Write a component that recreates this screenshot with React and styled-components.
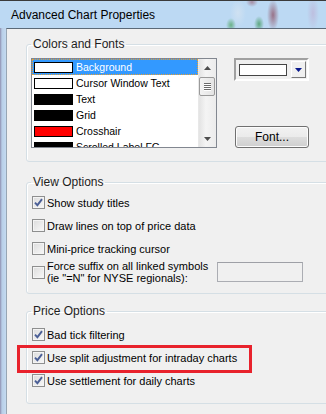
import React from 'react';
import styled, { createGlobalStyle } from 'styled-components';

const GlobalStyle = createGlobalStyle`
  html, body {
    margin: 0;
    padding: 0;
    background: #f0f0f0;
  }
  body {
    font-family: "Liberation Sans", Arial, sans-serif;
    color: #000;
  }
`;

const Window = styled.div`
  width: 326px;
  height: 414px;
  overflow: hidden;
  display: flex;
  flex-direction: column;
  background: linear-gradient(90deg, #8f8fb0 0, #b8cfe8 2px, #c4daf0 6px);
`;

const TitleBar = styled.div`
  height: 28px;
  flex: none;
  box-sizing: border-box;
  border-top: 1px solid #3a3a3a;
  padding: 6px 0 0 11px;
  font-size: 12px;
  line-height: 16px;
  color: #000;
  background:
    radial-gradient(ellipse 5px 7px at 231px 24px, rgba(70, 160, 90, 0.7), transparent),
    radial-gradient(ellipse 5px 8px at 259px 23px, rgba(60, 150, 90, 0.75), transparent),
    radial-gradient(ellipse 6px 16px at 273px 14px, rgba(140, 80, 100, 0.75), transparent),
    radial-gradient(ellipse 6px 5px at 252px 1px, rgba(150, 90, 110, 0.6), transparent),
    radial-gradient(ellipse 6px 18px at 313px 12px, rgba(190, 180, 215, 0.7), transparent),
    radial-gradient(ellipse 8px 14px at 238px 12px, rgba(220, 230, 240, 0.6), transparent),
    #bcd9f3;
`;

const Body = styled.div`
  flex: 1;
  display: flex;
  padding-left: 6px;
`;

const Client = styled.div`
  width: 360px;
  flex: none;
  box-sizing: border-box;
  background: #f0f0f0;
  border-top: 1px solid #5b6a78;
  border-left: 1px solid #97a6b4;
  padding: 8px 0 0 19px;
`;

const Group = styled.fieldset`
  position: relative;
  margin: ${(p) => p.$top || 0}px 0 0 0;
  padding: ${(p) => p.$pad};
  width: 330px;
  box-sizing: border-box;
  min-width: 0;
  border: 1px solid #d5dfe5;
  border-radius: 3px;
  box-shadow: inset 1px 1px 0 #fff;
`;

const Legend = styled.legend`
  padding: 0 2px;
  font-size: 12px;
  line-height: 14px;
  color: #1e1e1e;
`;

const ColorsRow = styled.div`
  display: flex;
  gap: 17px;
`;

const ListBox = styled.div`
  width: 186px;
  height: 90px;
  box-sizing: border-box;
  border: 1px solid #828790;
  background: #fff;
  display: flex;
  overflow: hidden;
`;

const Items = styled.div`
  flex: 1;
  overflow: hidden;
`;

const Item = styled.div`
  height: 16px;
  box-sizing: border-box;
  display: flex;
  align-items: center;
  gap: 3px;
  padding-left: 2px;
  font-size: 10.5px;
  white-space: nowrap;
  color: ${(p) => (p.$selected ? '#fff' : '#000')};
  background: ${(p) => (p.$selected ? '#3399ff' : 'transparent')};
  outline: ${(p) => (p.$selected ? '1px dotted #e8a030' : 'none')};
  outline-offset: -1px;
`;

const Swatch = styled.span`
  width: 39px;
  height: 11px;
  flex: none;
  box-sizing: border-box;
  border: 1px solid #000;
  background: ${(p) => p.$color};
`;

const ScrollBar = styled.div`
  width: 17px;
  flex: none;
  display: flex;
  flex-direction: column;
  background: linear-gradient(90deg, #e3e3e3, #f4f4f4 40%, #ececec);
  border-left: 1px solid #e8e8e8;
`;

const Arrow = styled.div`
  height: 17px;
  flex: none;
  display: flex;
  align-items: center;
  justify-content: center;
`;

const Track = styled.div`
  flex: 1;
`;

const Thumb = styled.div`
  margin: 1px 1px 0 0;
  height: 19px;
  box-sizing: border-box;
  border: 1px solid #9a9a9a;
  border-radius: 2px;
  background: linear-gradient(90deg, #f3f3f3, #e4e4e4);
  display: flex;
  flex-direction: column;
  justify-content: center;
  align-items: center;
  gap: 1px;
`;

const Grip = styled.span`
  width: 7px;
  height: 1px;
  background: #6a6a6a;
  box-shadow: 0 1px 0 #fff;
`;

const Side = styled.div`
  width: 75px;
  display: flex;
  flex-direction: column;
  justify-content: space-between;
`;

const Combo = styled.div`
  height: 23px;
  box-sizing: border-box;
  border: 2px solid;
  border-color: #a0a0a0 #fff #fff #a0a0a0;
  background: #f0f0f0;
  display: flex;
  align-items: center;
  padding: 0 1px 0 3px;
  gap: 4px;
`;

const ComboValue = styled.span`
  width: 48px;
  height: 12px;
  box-sizing: border-box;
  border: 1px solid #454545;
  background: #fff;
`;

const ComboButton = styled.span`
  width: 15px;
  height: 17px;
  box-sizing: border-box;
  border: 1px solid;
  border-color: #fff #7a7a7a #7a7a7a #fff;
  background: #f0f0f0;
  display: flex;
  align-items: center;
  justify-content: center;
`;

const Button = styled.button`
  width: 74px;
  height: 22px;
  margin-left: 1px;
  border: 1px solid #707070;
  border-radius: 3px;
  background: linear-gradient(#f2f2f2 0, #ebebeb 50%, #dddddd 51%, #cfcfcf 100%);
  box-shadow: inset 0 0 0 1px #fcfcfc;
  font-family: inherit;
  font-size: 12px;
  color: #000;
  padding: 0;
`;

const Row = styled.div`
  position: relative;
  display: flex;
  align-items: center;
  height: ${(p) => p.$h || 23}px;
  padding-left: 1px;
`;

const Box = styled.span`
  width: 13px;
  height: 13px;
  flex: none;
  box-sizing: border-box;
  border: 1px solid #8e8f8f;
  background: linear-gradient(135deg, #dcdcdc, #f8f8f8);
  box-shadow: inset 0 0 0 1px #f4f4f4;
  display: flex;
  align-items: center;
  justify-content: center;
  margin-right: 2px;
`;

const Label = styled.span`
  font-size: 11px;
  line-height: 12px;
  color: #000;
  width: ${(p) => (p.$w ? `${p.$w}px` : 'auto')};
  flex: none;
`;

const TextBox = styled.span`
  width: 86px;
  height: 20px;
  box-sizing: border-box;
  border: 1px solid #abadb3;
  border-top-color: #9ea0a6;
  background: #f0f0f0;
`;

const Highlight = styled.span`
  position: absolute;
  left: -14px;
  top: -1px;
  width: 235px;
  height: 28px;
  box-sizing: border-box;
  border: 3px solid #e8222c;
  pointer-events: none;
`;

const Check = ({ checked }) => (
  <Box>
    {checked && (
      <svg width="9" height="9" viewBox="0 0 9 9">
        <path d="M1 4.6 L3.4 7.2 L8 1.2" fill="none" stroke="#4b5f96" strokeWidth="1.9" />
      </svg>
    )}
  </Box>
);

const Option = ({ checked, children, h, w, extra, highlight }) => (
  <Row $h={h}>
    <Check checked={checked} />
    <Label $w={w}>{children}</Label>
    {extra}
    {highlight && <Highlight />}
  </Row>
);

const colors = [
  { name: 'Background', color: '#fff' },
  { name: 'Cursor Window Text', color: '#fff' },
  { name: 'Text', color: '#000' },
  { name: 'Grid', color: '#000' },
  { name: 'Crosshair', color: '#ff0000' },
  { name: 'Scrolled Label FG', color: '#000' },
];

const App = () => {
  return (
    <Window>
      <GlobalStyle />
      <TitleBar>Advanced Chart Properties</TitleBar>
      <Body>
        <Client>
          {/* Colors and Fonts */}
          <Group $pad="7px 0 13px 4px">
            <Legend>Colors and Fonts</Legend>
            <ColorsRow>
              <ListBox>
                <Items>
                  {colors.map((c, i) => (
                    <Item key={c.name} $selected={i === 0}>
                      <Swatch $color={c.color} />
                      {c.name}
                    </Item>
                  ))}
                </Items>
                <ScrollBar>
                  <Arrow>
                    <svg width="7" height="4" viewBox="0 0 7 4">
                      <path d="M0 4 L3.5 0 L7 4 Z" fill="#4d4d4d" />
                    </svg>
                  </Arrow>
                  <Thumb>
                    <Grip />
                    <Grip />
                    <Grip />
                    <Grip />
                  </Thumb>
                  <Track />
                  <Arrow>
                    <svg width="7" height="4" viewBox="0 0 7 4">
                      <path d="M0 0 L7 0 L3.5 4 Z" fill="#4d4d4d" />
                    </svg>
                  </Arrow>
                </ScrollBar>
              </ListBox>
              <Side>
                <Combo>
                  <ComboValue />
                  <ComboButton>
                    <svg width="7" height="4" viewBox="0 0 7 4">
                      <path d="M0 0 L7 0 L3.5 4 Z" fill="#0a1a8c" />
                    </svg>
                  </ComboButton>
                </Combo>
                <Button>Font...</Button>
              </Side>
            </ColorsRow>
          </Group>

          {/* View Options */}
          <Group $top={13} $pad="2px 0 9px 4px">
            <Legend>View Options</Legend>
            <Option checked>Show study titles</Option>
            <Option>Draw lines on top of price data</Option>
            <Option>Mini-price tracking cursor</Option>
            <Option h={24} w={170} extra={<TextBox />}>
              Force suffix on all linked symbols
              <br />
              (ie "=N" for NYSE regionals):
            </Option>
          </Group>

          {/* Price Options */}
          <Group $top={10} $pad="5px 0 11px 4px">
            <Legend>Price Options</Legend>
            <Option checked>Bad tick filtering</Option>
            <Option checked highlight>Use split adjustment for intraday charts</Option>
            <Option checked>Use settlement for daily charts</Option>
          </Group>
        </Client>
      </Body>
    </Window>
  );
};

export default App;
